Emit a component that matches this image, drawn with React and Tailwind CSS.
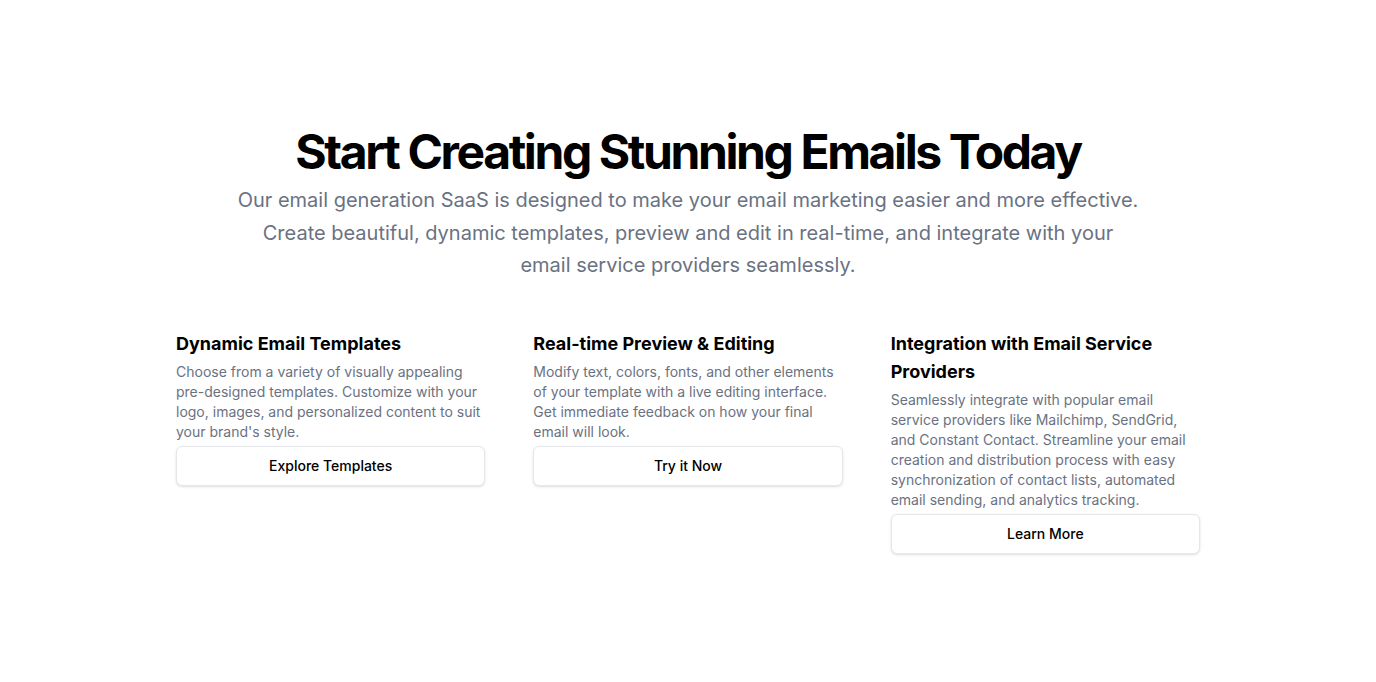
export default function App() {
  const features = [
    {
      title: "Dynamic Email Templates",
      desc: "Choose from a variety of visually appealing pre-designed templates. Customize with your logo, images, and personalized content to suit your brand's style.",
      btn: "Explore Templates",
    },
    {
      title: "Real-time Preview & Editing",
      desc: "Modify text, colors, fonts, and other elements of your template with a live editing interface. Get immediate feedback on how your final email will look.",
      btn: "Try it Now",
    },
    {
      title: "Integration with Email Service Providers",
      desc: "Seamlessly integrate with popular email service providers like Mailchimp, SendGrid, and Constant Contact. Streamline your email creation and distribution process with easy synchronization of contact lists, automated email sending, and analytics tracking.",
      btn: "Learn More",
    },
  ];
  return (
    <div
      className="w-full min-h-screen flex items-center justify-center bg-white"
      style={{ fontFamily: "Inter, 'Noto Sans', sans-serif" }}
    >
      <div className="w-[1024px] flex flex-col gap-12">
        <div className="flex flex-col items-center gap-2 text-center">
          <h1 className="text-5xl leading-none font-bold tracking-tighter text-black">
            Start Creating Stunning Emails Today
          </h1>
          <p className="max-w-[902px] text-xl leading-[32.5px] text-gray-500">
            Our email generation SaaS is designed to make your email marketing easier and more effective. Create beautiful, dynamic templates, preview and edit in real-time, and integrate with your email service providers seamlessly.
          </p>
        </div>
        <div className="grid grid-cols-3 gap-12 items-start">
          {features.map((f) => (
            <div key={f.title} className="flex flex-col gap-1">
              <h3 className="text-lg leading-7 font-bold text-black">{f.title}</h3>
              <p className="text-sm leading-5 text-gray-500">{f.desc}</p>
              <button className="h-10 w-full rounded-md border border-gray-200 bg-white text-sm font-medium text-black shadow-sm">
                {f.btn}
              </button>
            </div>
          ))}
        </div>
      </div>
    </div>
  );
}
